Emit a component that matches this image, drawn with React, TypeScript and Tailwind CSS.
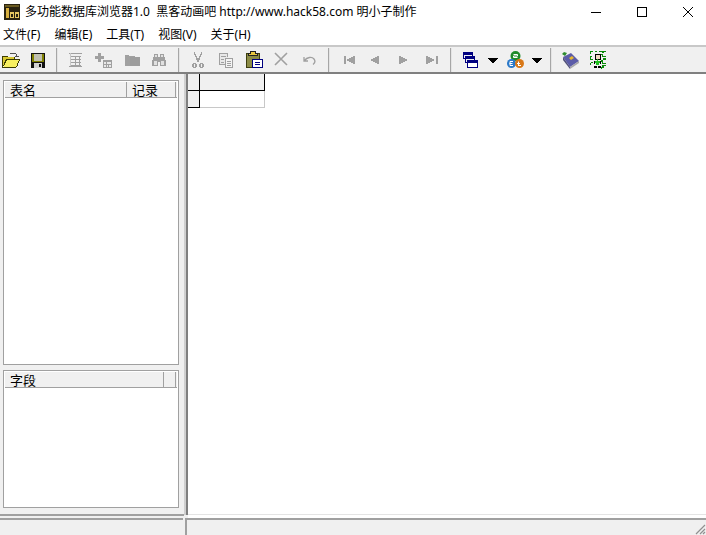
const font = { fontFamily: '"Noto Sans", "Noto Sans CJK SC", sans-serif' };

function Sep({ ml }: { ml: number }) {
  return <div className="w-[2px] h-[24px] bg-[#a6a6a6] border-r border-r-[#e4e4e4] shrink-0" style={{ marginLeft: ml }} />;
}

function Ico({ w, children, ml = 0 }: { w: number; children: React.ReactNode; ml?: number }) {
  return (
    <svg width={w} height={20} viewBox={`0 0 ${w} 20`} className="shrink-0" shapeRendering="crispEdges" style={{ marginLeft: ml }}>
      {children}
    </svg>
  );
}

const G = "#a0a0a0";

function Arrow() {
  return <path d="M0 8h10v1h-1v1h-1v1h-1v1h-1v1h-2v-1h-1v-1h-1v-1h-1v-1h-1z" fill="#000" />;
}

function Icons() {
  return (
    <div className="flex items-center h-[25px] bg-[#f0f0f0]">
      <Ico w={18} ml={2}>
        <path d="M1 6h5v1h6v9H1z" fill="#d8c830" />
        <path d="M2 16l3-6h12l-3 7H2z" fill="#f8f060" />
        <path d="M0 6h6v1H1v10h13v1H0zM4 9h14v1l-3 7h-1l3-7H5l-3 6H1zM12 7h1v2h-1z" fill="#3c3c00" />
        <path d="M8 3h6v1H8zM14 4h1v3h-1zM15 6h2v1h-2zM13 6h1v1h-1z" fill="#505050" />
      </Ico>
      <Ico w={16} ml={10}>
        <path d="M1 3h14v15H1z" fill="#111" />
        <path d="M2 4h12v7H2zM2 11h12v1H2z" fill="#808000" />
        <path d="M4 4h8v7H4z" fill="#c0c0b0" />
        <path d="M4 13h8v5H4z" fill="#d0d0d0" />
        <path d="M9 14h2v3H9z" fill="#111" />
      </Ico>
      <Sep ml={10} />
      <Ico w={16} ml={9}>
        <path d="M2 3h13v1H2zM2 16h13v1H2z" fill={G} />
        <path d="M4 6h10v1H4zM4 9h10v1H4zM4 12h10v1H4zM4 15h10v1H4z" fill={G} />
        <path d="M8 6h1v9H8zM12 6h1v9h-1z" fill={G} />
        <path d="M3 3h1v13H3z" fill="#c8c8c8" />
      </Ico>
      <Ico w={18} ml={11}>
        <path d="M4 3h3v3h3v3H7v3H4V9H1V6h3z" fill={G} />
        <path d="M9 10h9v8H9z" fill="#e8e8e8" />
        <path d="M9 10h9v2H9zM9 17h9v1H9zM9 12h1v5H9zM17 12h1v5h-1zM12 12h1v5h-1zM14 14h1v3h-1zM10 14h7v1h-7z" fill={G} />
      </Ico>
      <Ico w={16} ml={12}>
        <path d="M1 5h4v1h6v10H1z" fill={G} />
        <path d="M6 7h10v9H6z" fill="#9c9c9c" />
      </Ico>
      <Ico w={16} ml={11}>
        <path d="M3 4h4v3h2V4h4v3h1v3h1v6h-6v-4H7v4H1v-6h1V7h1z" fill={G} />
        <path d="M3 11h3v4H3zM10 11h3v4h-3zM4 5h2v2H4zM10 5h2v2h-2z" fill="#e0e0e0" />
      </Ico>
      <Sep ml={11} />
      <Ico w={14} ml={11}>
        <path d="M3 2h1v2h1v2h1v2h2V6h1V4h1V2h1v3h-1v2h-1v3h-1v2H6v-2H5V7H4V5H3z" fill={G} />
        <path d="M2 13h3v1h1v3H5v1H2v-1H1v-3h1zM9 13h3v1h1v3h-1v1H9v-1H8v-3h1z" fill={G} />
        <path d="M3 14h1v3H3zM10 14h1v3h-1z" fill="#f0f0f0" />
      </Ico>
      <Ico w={16} ml={13}>
        <path d="M1 3h9v12H1z" fill="#e8e8e8" />
        <path d="M1 3h9v1H1zM1 4h1v11H1zM1 14h6v1H1zM9 4h1v3H9zM3 6h5v1H3zM3 9h3v1H3zM3 12h3v1H3z" fill={G} />
        <path d="M7 8h8v10H7z" fill="#f4f4f4" />
        <path d="M7 8h8v1H7zM7 17h8v1H7zM7 9h1v8H7zM14 9h1v8h-1zM9 11h4v1H9zM9 13h4v1H9zM9 15h4v1H9z" fill={G} />
      </Ico>
      <Ico w={17} ml={12}>
        <path d="M0 3h14v15H0z" fill="#3e3e10" />
        <path d="M1 4h12v13H1z" fill="#8c8c46" />
        <path d="M4 1h6v2h2v3H2V3h2z" fill="#222" />
        <path d="M5 2h4v2H5zM3 4h8v1H3z" fill="#e8c840" />
        <path d="M6 9h11v9H6z" fill="#000080" />
        <path d="M7 10h9v7H7z" fill="#fff" />
        <path d="M9 12h5v1H9zM9 14h5v1H9z" fill="#000080" />
      </Ico>
      <svg width="16" height="20" viewBox="0 0 16 20" className="shrink-0" style={{ marginLeft: 10 }}>
        <path d="M2 3l12 12M14 3L2 15" stroke={G} strokeWidth="1.6" />
      </svg>
      <svg width="14" height="20" viewBox="0 0 14 20" className="shrink-0" style={{ marginLeft: 14 }}>
        <path d="M1 7v4h4M1.5 10.5 C4 7 9 6.5 11 9 C12.5 11 12 13 10 14.5" fill="none" stroke={G} strokeWidth="1.3" />
      </svg>
      <Sep ml={11} />
      <Ico w={13} ml={13}>
        <path d="M1 6h2v8H1zM10 6h2v8h-2zM8 7h2v6H8zM6 8h2v4H6zM4 9h2v2H4z" fill={G} />
      </Ico>
      <Ico w={10} ml={15}>
        <path d="M6 6h2v8H6zM4 7h2v6H4zM2 8h2v4H2zM0 9h2v2H0z" fill={G} />
      </Ico>
      <Ico w={10} ml={18}>
        <path d="M0 6h2v8H0zM2 7h2v6H2zM4 8h2v4H4zM6 9h2v2H6z" fill={G} />
      </Ico>
      <Ico w={13} ml={17}>
        <path d="M0 6h2v8H0zM2 7h2v6H2zM4 8h2v4H4zM6 9h2v2H6zM10 6h2v8h-2z" fill={G} />
      </Ico>
      <Sep ml={11} />
      <Ico w={16} ml={10}>
        <path d="M1 2h10v7H1zM3 6h10v7H3zM5 10h11v8H5z" fill="#000080" />
        <path d="M2 5h8v1H2zM2 6h1v2H2z" fill="#f0f0f0" />
        <path d="M4 9h1v3H4zM5 9h7v1H5z" fill="#f0f0f0" />
        <path d="M6 13h9v4H6z" fill="#fff" />
      </Ico>
      <Ico w={10} ml={10}><Arrow /></Ico>
      <svg width="17" height="20" viewBox="0 0 17 20" className="shrink-0" style={{ marginLeft: 9 }}>
        <circle cx="8.5" cy="6" r="5" fill="#1e8a2a" />
        <circle cx="4.5" cy="13.5" r="4.5" fill="#2a78c8" />
        <circle cx="12.5" cy="13.5" r="4.5" fill="#d87818" />
        <path d="M6.5 4.5h4v1.5h-4v1.5h4" fill="none" stroke="#fff" strokeWidth="1" />
        <path d="M6 11.5h-3v4h3M2.5 13.5h3M11.5 11.5v4M10 13.5h3M11 15.5h3" fill="none" stroke="#fff" strokeWidth="1" />
      </svg>
      <Ico w={10} ml={8}><Arrow /></Ico>
      <Sep ml={8} />
      <svg width="18" height="20" viewBox="0 0 18 20" className="shrink-0" style={{ marginLeft: 10 }}>
        <path d="M1 7l8-4 8 8-9 6z" fill="#5c5ca8" />
        <path d="M1 7l7 10v2L1 10z" fill="#50507a" />
        <path d="M8 17l9-6v2L8 19z" fill="#a8a8a8" />
        <path d="M7 8l3-2 2 2-3 2z" fill="#e8b830" />
        <path d="M0 4l2-2 3 1-2 3z" fill="#2e8b2e" />
      </svg>
      <svg width="16" height="20" viewBox="0 0 16 20" className="shrink-0" style={{ marginLeft: 10 }} shapeRendering="crispEdges">
        <path d="M0 1h3v1H1v2H0zM5 1h2v1H5zM9 1h7v1h-2v1h-2V2H9zM10 4h3v2h3v1h-4V5h-2zM13 8h3v2h-3zM11 10h2v3h3v1h-4v-2h-1zM12 15h4v1h-2v2h-2v1h-1v-2h1zM0 6h2v1H1v2h2v1H0zM1 12h2v1H1v2H0v-2h1z" fill="#0a8a0a" />
        <rect x="5" y="4" width="5" height="5" fill="#f0d8c0" stroke="#000" strokeWidth="1" />
        <path d="M7 9h1v2h2v2H9v2H6v-2H5v-2h2z" fill="#20c020" />
        <path d="M4 11h1v3H4zM10 11h1v3h-1zM4 16h3v2H4zM8 16h3v2H8z" fill="#000" />
      </svg>
    </div>
  );
}

function ListPanel({ className, first, second, split }: { className: string; first: string; second: string; split: string }) {
  return (
    <div className={`bg-white border border-[#a0a0a0] flex flex-col min-h-0 ${className}`}>
      <div className="h-[16px] mt-[1px] mx-[1px] bg-[#f0f0f0] border-b border-[#a0a0a0] flex text-[13px] leading-[16px] text-black">
        <div className={`${split} border-r border-[#a0a0a0] pl-[5px] shrink-0`}>{first}</div>
        <div className="flex-1 mr-[1px] border-r border-[#a0a0a0] pl-[5px]">{second}</div>
      </div>
    </div>
  );
}

export default function App() {
  return (
    <div className="w-[706px] h-[535px] bg-white flex flex-col overflow-hidden text-black" style={font}>
      <div className="h-[23px] flex items-center shrink-0">
        <svg width="16" height="16" viewBox="0 0 16 16" className="ml-[4px] mt-[1px] shrink-0" shapeRendering="crispEdges">
          <rect width="16" height="16" fill="#2a2310" />
          <rect x="1" y="1" width="14" height="2" fill="#6a5a20" />
          <path d="M2 4h3v10H2z" fill="#d8b040" />
          <path d="M6 8h4v6H6zM11 8h4v6h-4z" fill="#e8c860" />
          <path d="M7 10h2v3H7zM12 10h2v3h-2z" fill="#2a2310" />
        </svg>
        <span className="ml-[5px] text-[12px] leading-[22px] whitespace-pre">多功能数据库浏览器1.0  黑客动画吧 http://www.hack58.com 明小子制作</span>
        <div className="ml-auto flex items-center h-full">
          <svg width="12" height="12" viewBox="0 0 12 12" className="mr-[34px]"><path d="M1 6.5h10" stroke="#000" /></svg>
          <svg width="12" height="12" viewBox="0 0 12 12" className="mr-[34px]"><rect x="1.5" y="1.5" width="9" height="9" fill="none" stroke="#000" /></svg>
          <svg width="12" height="12" viewBox="0 0 12 12" className="mr-[12px]"><path d="M1 1l10 10M11 1L1 11" stroke="#000" /></svg>
        </div>
      </div>
      <div className="h-[22px] flex items-center gap-[14px] pl-[3px] pt-[2px] text-[12px] shrink-0">
        <span>文件(F)</span>
        <span>编辑(E)</span>
        <span>工具(T)</span>
        <span>视图(V)</span>
        <span>关于(H)</span>
      </div>
      <div className="shrink-0 border-t-2 border-t-[#c8c8c8] border-b-2 border-b-[#808080]">
        <Icons />
      </div>
      <div className="flex-1 flex min-h-0 bg-[#f0f0f0]">
        <div className="w-[184px] shrink-0 mb-[2px] pl-[3px] pr-[5px] pt-[6px] pb-[6px] flex flex-col gap-[5px] border-b-2 border-b-[#a0a0a0]">
          <ListPanel className="flex-1" first="表名" second="记录" split="w-[122px]" />
          <ListPanel className="h-[138px] shrink-0" first="字段" second="" split="w-[159px]" />
        </div>
        <div className="w-[2px] shrink-0 mb-[3px] bg-[#d0d0d0]" />
        <div className="w-[2px] shrink-0 mb-[3px] bg-[#808080]" />
        <div className="flex-1 flex flex-col min-w-0">
          <div className="flex-1 bg-white">
            <div className="flex h-[17px]">
              <div className="w-[12px] bg-[#f0f0f0] border-r border-b border-black" />
              <div className="w-[65px] bg-[#f0f0f0] border-r border-b border-black" />
            </div>
            <div className="flex h-[17px]">
              <div className="w-[12px] bg-[#f0f0f0] border-r border-b border-black" />
              <div className="w-[65px] bg-white border-r border-b border-[#c8c8c8]" />
            </div>
          </div>
          <div className="h-[4px] bg-white border-t border-[#e4e4e4]" />
        </div>
      </div>
      <div className="h-[17px] shrink-0 flex bg-[#f0f0f0] relative">
        <div className="w-[183px] border-t-2 border-t-[#a0a0a0] shrink-0" />
        <div className="w-[2px] shrink-0" />
        <div className="flex-1 border-t-2 border-t-[#a0a0a0] border-l-2 border-l-[#a0a0a0]" />
        <svg width="12" height="12" viewBox="0 0 12 12" className="absolute right-0 bottom-0">
          <path d="M11 2L2 11M11 6L6 11M11 9L9 11" stroke="#909090" strokeWidth="1.2" />
        </svg>
      </div>
    </div>
  );
}
